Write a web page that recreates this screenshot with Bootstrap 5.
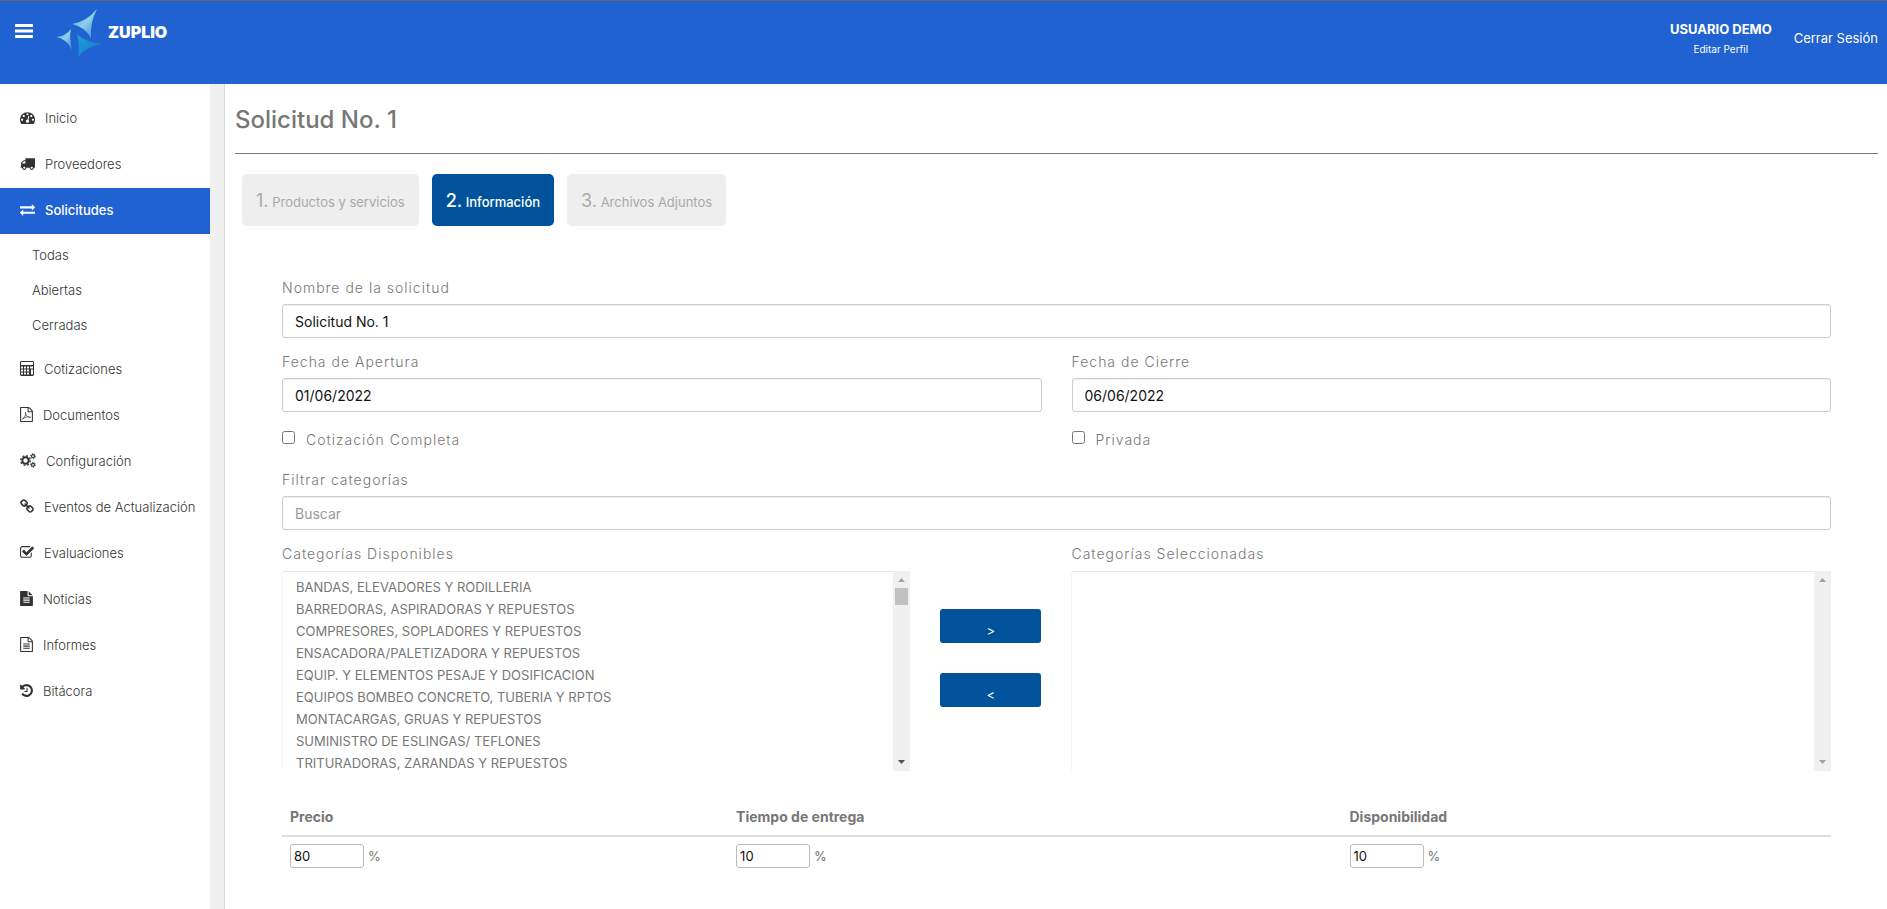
<!DOCTYPE html>
<html lang="es">
<head>
<meta charset="utf-8">
<meta name="viewport" content="width=device-width, initial-scale=1">
<title>Zuplio - Solicitud No. 1</title>
<link href="https://cdn.jsdelivr.net/npm/bootstrap@5.3.0/dist/css/bootstrap.min.css" rel="stylesheet">
<style>
  body { font-family: Inter, "Open Sans", sans-serif; font-size: 13px; color: #777; background: #fff; }
  a { text-decoration: none; color: inherit; }
  .topbar { background: #2062d1; border-top: 1px solid #666; height: 84px; color: #fff; padding: 0 9px 0 15px; }
  .menu-btn { width: 18px; height: 16px; margin-top: 22px; }
  .brand { margin: 7px 0 0 23px; font-size: 16px; font-weight: 900; line-height: 48px; }
  .user-box { padding: 18px 6px 0 0; }
  .user-name { font-size: 13px; font-weight: 700; line-height: 20px; }
  .user-edit { font-size: 10px; line-height: 20px; }
  .logout { font-size: 13px; line-height: 20px; margin-top: 27px; }
  .sidebar { width: 210px; padding-top: 12px; color: #333; flex: none; }
  .side-link { display: flex; align-items: center; gap: 10px; height: 46px; padding-left: 20px; font-size: 13px; font-weight: 300; white-space: nowrap; }
  .side-link svg { fill: currentColor; flex: none; margin-bottom: 3px; }
  .side-link.active { background: #2062d1; color: #fff; font-weight: 500; }
  .side-sub { padding: 4px 0; }
  .side-sub a { display: block; height: 35px; line-height: 35px; padding-left: 32px; font-size: 13px; font-weight: 300; }
  .gutter { width: 14px; background: #f0f0f0; flex: none; }
  .content { border-left: 1px solid #d9dae2; border-bottom: 1px solid #eee; padding: 0 9px 0 10px; min-width: 0; }
  .page-title { font-size: 24px; font-weight: 500; line-height: 30px; padding: 21px 0 18px; margin: 0; border-bottom: 1px solid #777; color: #777; }
  .steps { padding: 20px 7px 0; gap: 13px; }
  .step { height: 52px; padding: 0 14px; border: 0; border-radius: 5px; background: #eee; color: #aaa; font-size: 13px; }
  .step b { font-size: 18px; font-weight: 400; }
  .step.current { background: #00539b; color: #fff; font-weight: 500; }
  .step.current b { font-weight: 500; }
  .form-area { padding: 50px 47px 0; }
  .row-wide { --bs-gutter-x: 30px; }
  .field-label { display: block; font-size: 14px; font-weight: 300; letter-spacing: 1px; line-height: 24px; margin-bottom: 4px; }
  .text-field { height: 34px; padding: 0 12px; font-size: 14px; border: 1px solid #ccc; border-radius: 3px; color: #111; box-shadow: inset 0 1px 1px #00000013; }
  .text-field::placeholder { color: #999; }
  .field { padding-bottom: 12px; }
  .check { display: flex; align-items: flex-start; gap: 11px; height: 44px; padding-top: 7px; }
  .check input { width: 13px; height: 13px; margin: 0; }
  .check label { letter-spacing: 1px; font-size: 14px; font-weight: 300; line-height: 16px; padding-top: 1px; }
  .listbox { display: flex; height: 200px; margin-top: 5px; }
  .listbox select { flex: 1; min-width: 0; border: 1px solid #f6f6f6; border-top-color: #e6e6e6; border-right: 0; border-bottom: 0; border-radius: 3px 0 0 0; padding: 7px 11px 0; overflow: hidden; color: #777; font-size: 13px; background: #fff; outline: 0; }
  .listbox select::-webkit-scrollbar { display: none; }
  .listbox option { padding: 0 2px; height: 22px; min-height: 22px; line-height: 22px; }
  .scroller { width: 17px; background: #f0f0f0; display: flex; flex-direction: column; align-items: center; padding: 7px 0; }
  .scroller svg { width: 7px; height: 4px; flex: none; }
  .scroller span { width: 13px; height: 17px; margin-top: 6px; background: #c1c1c1; }
  .move { padding-top: 67px; display: flex; flex-direction: column; gap: 30px; }
  .move button { height: 34px; border: 0; border-radius: 3px; background: #00539b; color: #fff; font-size: 13px; padding: 10px 0 0; line-height: 20px; }
  .weights { margin: 28px 0 37px; width: 100%; color: #777; }
  .weights th { font-size: 14px; font-weight: 700; padding: 8px 8px 9px; line-height: 19px; border-bottom: 2px solid #ddd; }
  .weights td { padding: 7px 8px 9px; line-height: 24px; }
  .weights input { width: 74px; height: 24px; padding: 0 3px; border: 1px solid #bbb; border-radius: 3px; font-size: 13px; color: #111; vertical-align: top; margin-right: 4px; }
</style>
</head>
<body>
<div class="d-flex flex-column min-vh-100">
  <header class="topbar d-flex align-items-start">
    <button class="menu-btn btn p-0 border-0 d-flex" aria-label="Menú">
      <svg width="18" height="16" viewBox="0 0 18 16" fill="#fff"><path d="M0 1h18v3H0zM0 6.500h18v3H0zM0 12h18v3H0z"/></svg>
    </button>
    <a href="#" class="brand d-flex align-items-start">
      <svg width="52" height="50" viewBox="0 0 52 50">
        <defs>
          <linearGradient id="ga" x1="0" y1="0" x2="1" y2="1"><stop offset="0" stop-color="#3a9bd8"/><stop offset=".5" stop-color="#8fd0ea"/><stop offset="1" stop-color="#2f86d6"/></linearGradient>
          <linearGradient id="gb" x1="0" y1="0" x2="1" y2="1"><stop offset="0" stop-color="#1f9fd8"/><stop offset="1" stop-color="#1b74d0"/></linearGradient>
        </defs>
        <path fill="url(#ga)" d="M41 1Q34 14 35 30Q29 19 16 16Q30 14 41 1z"/>
        <path fill="url(#ga)" d="M15 21Q13 30 16 42Q11 31 0 29Q10 28 15 21z"/>
        <path fill="url(#gb)" d="M21 26Q30 35 47 36Q30 38 22 49Q24 36 21 26z"/>
      </svg>ZUPLIO
    </a>
    <div class="ms-auto d-flex gap-3">
      <div class="user-box text-center">
        <div class="user-name">USUARIO DEMO</div>
        <a href="#" class="user-edit d-block">Editar Perfil</a>
      </div>
      <a href="#" class="logout">Cerrar Sesión</a>
    </div>
  </header>

  <div class="d-flex flex-grow-1">
    <nav class="sidebar">
      <a href="#" class="side-link"><svg width="15" height="15" viewBox="0 0 1792 1792"><path d="M384 1152q0-53-37.500-90.500t-90.500-37.500-90.500 37.500-37.500 90.500 37.500 90.500 90.500 37.500 90.500-37.500 37.500-90.500zm192-448q0-53-37.500-90.500t-90.500-37.500-90.500 37.500-37.500 90.500 37.500 90.500 90.500 37.500 90.500-37.500 37.500-90.500zm428 481l101-382q6-26-7.500-48.500t-38.500-29.500-48 6.500-30 39.500l-101 382q-60 5-107 43.500t-63 98.500q-20 77 20 146t117 89 146-20 89-117q16-60-6-117t-72-91zm660-33q0-53-37.500-90.500t-90.500-37.500-90.500 37.500-37.500 90.500 37.500 90.500 90.500 37.500 90.500-37.500 37.500-90.500zm-640-640q0-53-37.500-90.500t-90.500-37.500-90.500 37.500-37.500 90.500 37.500 90.500 90.500 37.500 90.500-37.500 37.500-90.500zm448 192q0-53-37.500-90.500t-90.500-37.500-90.500 37.500-37.500 90.500 37.500 90.500 90.500 37.500 90.500-37.500 37.500-90.500zm320 448q0 261-141 483-19 29-54 29h-1402q-35 0-54-29-141-221-141-483 0-182 71-348t191-286 286-191 348-71 348 71 286 191 191 286 71 348z"/></svg>Inicio</a>
      <a href="#" class="side-link"><svg width="15" height="15" viewBox="0 0 1792 1792"><path d="M640 1408q0-52-38-90t-90-38-90 38-38 90 38 90 90 38 90-38 38-90zm-384-512h384v-256h-158q-13 0-22 9l-195 195q-9 9-9 22v30zm1280 512q0-52-38-90t-90-38-90 38-38 90 38 90 90 38 90-38 38-90zm256-1088v1024q0 15-4 26.500t-13.500 18.500-16.500 11.500-23.500 6-22.500 2-25.500 0-22.500-.5q0 106-75 181t-181 75-181-75-75-181h-384q0 106-75 181t-181 75-181-75-75-181h-64q-3 0-22.500.5t-25.500 0-22.500-2-23.500-6-16.500-11.500-13.500-18.500-4-26.500q0-26 19-45t45-19v-320q0-8-.5-35t0-38 2.500-34.500 6.500-37 14-30.500 22.500-30l198-198q19-19 50.500-32t58.500-13h160v-192q0-26 19-45t45-19h1024q26 0 45 19t19 45z"/></svg>Proveedores</a>
      <a href="#" class="side-link active"><svg width="15" height="15" viewBox="0 0 1792 1792"><path d="M1792 1184v192q0 13-9.500 22.500t-22.500 9.500h-1376v192q0 13-9.500 22.500t-22.500 9.500q-12 0-24-10l-319-320q-9-9-9-22 0-14 9-23l320-320q9-9 23-9 13 0 22.500 9.500t9.500 22.500v192h1376q13 0 22.500 9.500t9.500 22.500zm0-544q0 14-9 23l-320 320q-9 9-23 9-13 0-22.500-9.500t-9.500-22.500v-192h-1376q-13 0-22.500-9.500t-9.500-22.500v-192q0-13 9.500-22.500t22.500-9.500h1376v-192q0-14 9-23t23-9q12 0 24 10l319 319q9 9 9 23z"/></svg>Solicitudes</a>
      <div class="side-sub">
        <a href="#">Todas</a>
        <a href="#">Abiertas</a>
        <a href="#">Cerradas</a>
      </div>
      <a href="#" class="side-link"><svg width="14" height="15" viewBox="0 0 14 15"><path fill-rule="evenodd" d="M1 0h12l1 1v13l-1 1H1l-1-1V1zM1 1v3h12V1zM1 5.500v2h2v-2zm3 0v2h2v-2zm3 0v2h2v-2zm3 0v2h3v-2zM1 8.500v2h2v-2zm3 0v2h2v-2zm3 0v2h2v-2zM1 11.500v2h2v-2zm3 0v2h2v-2zm3 0v2h2v-2zm4-3v5h2v-5z"/></svg>Cotizaciones</a>
      <a href="#" class="side-link"><svg width="13" height="15" viewBox="128 0 1536 1792"><path d="M1596 380q28 28 48 76t20 88v1152q0 40-28 68t-68 28h-1344q-40 0-68-28t-28-68v-1600q0-40 28-68t68-28h896q40 0 88 20t76 48zm-444-244v376h376q-10-29-22-41l-313-313q-12-12-41-22zm384 1528v-1024h-416q-40 0-68-28t-28-68v-416h-768v1536h1280z"/><path fill="none" stroke="currentColor" stroke-width="80" d="M420 1470Q560 1400 720 1080Q850 780 800 620Q740 620 790 800Q880 1080 1100 1190Q1300 1300 1390 1230Q1330 1140 1000 1180Q680 1230 420 1400z"/></svg>Documentos</a>
      <a href="#" class="side-link"><svg width="16" height="15" viewBox="0 0 16 15" fill="none"><g fill="none" stroke="currentColor"><circle cx="5.500" cy="7.500" r="3.200" stroke-width="2"/><circle cx="5.500" cy="7.500" r="4.800" stroke-width="1.400" stroke-dasharray="1.900 1.870"/><circle cx="13" cy="3.200" r="1.500" stroke-width="1.200"/><circle cx="13" cy="3.200" r="2.500" stroke-width=".9" stroke-dasharray="1.300 1.300"/><circle cx="13" cy="11.800" r="1.500" stroke-width="1.200"/><circle cx="13" cy="11.800" r="2.500" stroke-width=".9" stroke-dasharray="1.300 1.300"/></g></svg>Configuración</a>
      <a href="#" class="side-link"><svg width="14" height="15" viewBox="64 0 1664 1792"><path d="M1520 1216q0-40-28-68l-208-208q-28-28-68-28-42 0-72 32 3 3 19 18.500t21.500 21.500 15 19 13 25.500 3.500 27.500q0 40-28 68t-68 28q-15 0-27.500-3.500t-25.500-13-19-15-21.500-21.500-18.500-19q-33 31-33 73 0 40 28 68l206 207q27 27 68 27 40 0 68-26l147-146q28-28 28-67zm-703-705q0-40-28-68l-206-207q-28-28-68-28-39 0-68 27l-147 146q-28 28-28 67 0 40 28 68l208 208q27 27 68 27 42 0 72-31-3-3-19-18.500t-21.500-21.500-15-19-13-25.500-3.500-27.500q0-40 28-68t68-28q15 0 27.500 3.500t25.500 13 19 15 21.500 21.500 18.500 19q33-31 33-73zm895 705q0 120-85 203l-147 146q-83 83-203 83-121 0-204-85l-206-207q-83-83-83-203 0-123 88-209l-88-88q-86 88-208 88-120 0-204-84l-208-208q-84-84-84-204t85-203l147-146q83-83 203-83 121 0 204 85l206 207q83 83 83 203 0 123-88 209l88 88q86-88 208-88 120 0 204 84l208 208q84 84 84 204z"/></svg>Eventos de Actualización</a>
      <a href="#" class="side-link"><svg width="14" height="15" viewBox="64 0 1664 1792"><path d="M1472 930v318q0 119-84.500 203.500t-203.500 84.500h-832q-119 0-203.500-84.500t-84.500-203.500v-832q0-119 84.500-203.500t203.500-84.500h832q63 0 117 25 15 7 18 23 3 17-9 29l-49 49q-10 10-23 10-3 0-9-2-23-6-45-6h-832q-66 0-113 47t-47 113v832q0 66 47 113t113 47h832q66 0 113-47t47-113v-254q0-13 9-22l64-64q10-10 23-10 6 0 12 3 20 8 20 29zm231-489l-814 814q-24 24-57 24t-57-24l-430-430q-24-24-24-57t24-57l110-110q24-24 57-24t57 24l263 263 647-647q24-24 57-24t57 24l110 110q24 24 24 57t-24 57z"/></svg>Evaluaciones</a>
      <a href="#" class="side-link"><svg width="13" height="15" viewBox="128 0 1536 1792"><path fill-rule="evenodd" d="M1596 476q14 14 28 36h-472v-472q22 14 36 28zm-476 164h544v1056q0 40-28 68t-68 28h-1344q-40 0-68-28t-28-68v-1600q0-40 28-68t68-28h800v544q0 40 28 68t68 28zM512 768v128h768v-128zM512 1024v128h768v-128zM512 1280v128h768v-128z"/></svg>Noticias</a>
      <a href="#" class="side-link"><svg width="13" height="15" viewBox="128 0 1536 1792"><path d="M1596 380q28 28 48 76t20 88v1152q0 40-28 68t-68 28h-1344q-40 0-68-28t-28-68v-1600q0-40 28-68t68-28h896q40 0 88 20t76 48zm-444-244v376h376q-10-29-22-41l-313-313q-12-12-41-22zm384 1528v-1024h-416q-40 0-68-28t-28-68v-416h-768v1536h1280z"/><path d="M512 768h768v128H512zM512 1024h768v128H512zM512 1280h768v128H512z"/></svg>Informes</a>
      <a href="#" class="side-link"><svg width="13" height="15" viewBox="128 0 1536 1792"><path d="M1664 896q0 156-61 298t-164 245-245 164-298 61q-172 0-327-72.500t-264-204.500q-7-10-6.500-22.500t8.500-20.500l137-138q10-9 25-9 16 2 23 12 73 95 179 147t225 52q104 0 198.500-40.500t163.500-109.500 109.500-163.500 40.500-198.500-40.500-198.500-109.500-163.500-163.500-109.500-198.500-40.500q-98 0-188 35.500t-160 101.500l137 138q31 30 14 69-17 40-59 40h-448q-26 0-45-19t-19-45v-448q0-42 40-59 39-17 69 14l130 129q107-101 244.500-156.500t284.500-55.500q156 0 298 61t245 164 164 245 61 298zm-640-288v448q0 14-9 23t-23 9h-320q-14 0-23-9t-9-23v-64q0-14 9-23t23-9h224v-352q0-14 9-23t23-9h64q14 0 23 9t9 23z"/></svg>Bitácora</a>
    </nav>
    <div class="gutter"></div>

    <main class="content flex-grow-1">
      <h1 class="page-title">Solicitud No. 1</h1>
      <div class="steps d-flex">
        <button class="step"><b>1.</b> Productos y servicios</button>
        <button class="step current"><b>2.</b> Información</button>
        <button class="step"><b>3.</b> Archivos Adjuntos</button>
      </div>

      <form class="form-area">
        <div class="field">
          <label class="field-label" for="nombre">Nombre de la solicitud</label>
          <input id="nombre" type="text" class="text-field w-100" value="Solicitud No. 1">
        </div>
        <div class="row row-wide">
          <div class="col-6">
            <label class="field-label" for="apertura">Fecha de Apertura</label>
            <input id="apertura" type="text" class="text-field w-100" value="01/06/2022">
          </div>
          <div class="col-6">
            <label class="field-label" for="cierre">Fecha de Cierre</label>
            <input id="cierre" type="text" class="text-field w-100" value="06/06/2022">
          </div>
        </div>
        <div class="row row-wide pt-2 mt-1">
          <div class="col-6"><div class="check"><input id="completa" type="checkbox"><label for="completa">Cotización Completa</label></div></div>
          <div class="col-6"><div class="check"><input id="privada" type="checkbox"><label for="privada">Privada</label></div></div>
        </div>
        <div class="field">
          <label class="field-label" for="filtro">Filtrar categorías</label>
          <input id="filtro" type="text" class="text-field w-100" placeholder="Buscar">
        </div>
        <div class="row row-wide">
          <div class="col-5">
            <label class="field-label" for="disponibles">Categorías Disponibles</label>
            <div class="listbox">
              <select id="disponibles" multiple>
                <option>BANDAS, ELEVADORES Y RODILLERIA</option>
                <option>BARREDORAS, ASPIRADORAS Y REPUESTOS</option>
                <option>COMPRESORES, SOPLADORES Y REPUESTOS</option>
                <option>ENSACADORA/PALETIZADORA Y REPUESTOS</option>
                <option>EQUIP. Y ELEMENTOS PESAJE Y DOSIFICACION</option>
                <option>EQUIPOS BOMBEO CONCRETO, TUBERIA Y RPTOS</option>
                <option>MONTACARGAS, GRUAS Y REPUESTOS</option>
                <option>SUMINISTRO DE ESLINGAS/ TEFLONES</option>
                <option>TRITURADORAS, ZARANDAS Y REPUESTOS</option>
              </select>
              <div class="scroller" aria-hidden="true">
                <svg viewBox="0 0 7 4" fill="#a3a3a3"><path d="M0 4L3.500 0 7 4z"/></svg>
                <span></span>
                <svg class="mt-auto" viewBox="0 0 7 4" fill="#505050"><path d="M0 0h7L3.500 4z"/></svg>
              </div>
            </div>
          </div>
          <div class="col-1 move">
            <button type="button">&gt;</button>
            <button type="button">&lt;</button>
          </div>
          <div class="col-6">
            <label class="field-label" for="seleccionadas">Categorías Seleccionadas</label>
            <div class="listbox">
              <select id="seleccionadas" multiple></select>
              <div class="scroller" aria-hidden="true">
                <svg viewBox="0 0 7 4" fill="#a3a3a3"><path d="M0 4L3.500 0 7 4z"/></svg>
                <svg class="mt-auto" viewBox="0 0 7 4" fill="#a3a3a3"><path d="M0 0h7L3.500 4z"/></svg>
              </div>
            </div>
          </div>
        </div>
        <table class="weights">
          <colgroup><col style="width:28.800%"><col style="width:39.600%"><col></colgroup>
          <thead><tr><th>Precio</th><th>Tiempo de entrega</th><th>Disponibilidad</th></tr></thead>
          <tbody><tr>
            <td><input type="text" value="80" aria-label="Precio">%</td>
            <td><input type="text" value="10" aria-label="Tiempo de entrega">%</td>
            <td><input type="text" value="10" aria-label="Disponibilidad">%</td>
          </tr></tbody>
        </table>
      </form>
    </main>
  </div>
</div>
<script src="https://cdn.jsdelivr.net/npm/bootstrap@5.3.0/dist/js/bootstrap.bundle.min.js"></script>
</body>
</html>
